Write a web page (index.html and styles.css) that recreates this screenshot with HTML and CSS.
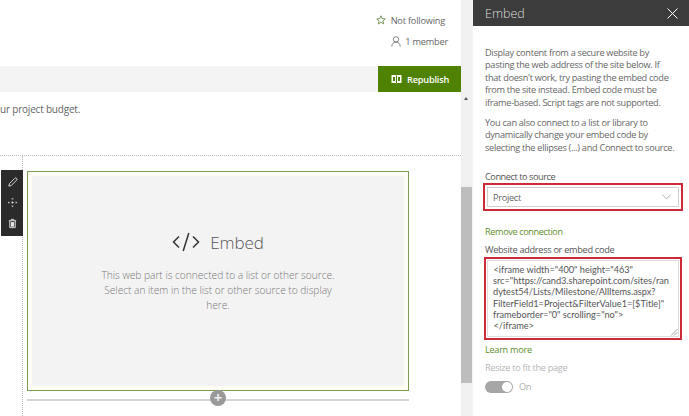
FILE: index.html
```html
<!DOCTYPE html>
<html lang="en">
<head>
<meta charset="utf-8">
<title>Embed</title>
<link rel="stylesheet" href="styles.css">
</head>
<body>
<div class="page">
  <main class="main">
    <header class="site-head">
      <div class="head-row follow">
        <svg class="head-icon" viewBox="0 0 10 10"><path d="M5 .8l1.200 2.800 3 .3-2.300 2 .7 3L5 7.300 2.400 8.900l.7-3-2.300-2 3-.3z" fill="none" stroke="#5f7f3a" stroke-width=".8"/></svg>
        <span>Not following</span>
      </div>
      <div class="head-row member">
        <svg class="head-icon tall" viewBox="0 0 10 11"><circle cx="5" cy="3.400" r="2.700" fill="none" stroke="#666" stroke-width=".8"/><path d="M.8 10.500c0-2.800 1.800-4.400 4.200-4.400s4.200 1.600 4.200 4.400" fill="none" stroke="#666" stroke-width=".8"/></svg>
        <span>1 member</span>
      </div>
    </header>
    <div class="command-bar">
      <button class="republish">
        <svg class="book" viewBox="0 0 11 10"><path d="M.5 1h4.200l.8.700.8-.7h4.200v8H6.300l-.8.500-.8-.5H.5z" fill="#fff"/><path d="M5.500 2v7" stroke="#4f8203"/><path d="M2 3h2v4H2zM7 3h2v4H7z" fill="#4f8203"/></svg>
        Republish
      </button>
    </div>
    <p class="intro">ur project budget.</p>
    <section class="canvas">
      <div class="toolbar">
        <svg class="tool" viewBox="0 0 12 12"><path d="M2 10l.7-2.800L8.400 1.500a1.300 1.300 0 0 1 2 2L4.700 9.300z" fill="none" stroke="#e6e6e6" stroke-width="1"/></svg>
        <svg class="tool" viewBox="0 0 12 12"><path d="M6 1l1.500 1.500h-3zM6 11L4.500 9.500h3zM1 6l1.500-1.500v3zM11 6L9.500 4.500v3z" fill="#e6e6e6"/><circle cx="6" cy="6" r="1.200" fill="#e6e6e6"/></svg>
        <svg class="tool" viewBox="0 0 12 12"><path d="M2 3h8M4.500 3V1.500h3V3M3 3v7.500h6V3" fill="none" stroke="#e6e6e6" stroke-width="1"/><path d="M4.200 4.500h3.600V9.500H4.200z" fill="#e6e6e6"/></svg>
      </div>
      <div class="webpart">
        <div class="placeholder">
          <div class="ph-title">
            <svg class="code" viewBox="0 0 28 20"><path d="M7 4.500L1.500 10 7 15.500M21 4.500l5.500 5.500L21 15.500M16.800 1l-5.600 18" fill="none" stroke="#333" stroke-width="1.500"/></svg>
            <span>Embed</span>
          </div>
          <p class="ph-text">This web part is connected to a list or other source. Select an item in the list or other source to display here.</p>
        </div>
      </div>
      <div class="add-line"><span class="add-btn">+</span></div>
    </section>
  </main>
  <div class="scrollbar"><span class="arrow"></span><span class="thumb"></span></div>
  <aside class="panel">
    <header class="panel-head">
      <span>Embed</span>
      <svg class="close" viewBox="0 0 11 11"><path d="M.5.500l10 10M10.500.500l-10 10" stroke="#fff" stroke-width="1"/></svg>
    </header>
    <div class="panel-body">
      <p class="desc first">Display content from a secure website by pasting the web address of the site below. If that doesn't work, try pasting the embed code from the site instead. Embed code must be iframe-based. Script tags are not supported.</p>
      <p class="desc second">You can also connect to a list or library to dynamically change your embed code by selecting the ellipses (...) and Connect to source.</p>
      <div class="field-label source-label">Connect to source</div>
      <div class="highlight select-wrap">
        <div class="select">
          <span>Project</span>
          <svg class="chev" viewBox="0 0 10 6"><path d="M.5.500L5 5 9.500.500" fill="none" stroke="#888" stroke-width=".8"/></svg>
        </div>
      </div>
      <a class="link remove">Remove connection</a>
      <div class="field-label code-label">Website address or embed code</div>
      <div class="highlight code-wrap">
        <div class="code-box">&#8202;&lt;iframe width="400" height="463"<br>src="https://cand3.sharepoint.com/sites/ran<br>dytest54/Lists/Milestone/AllItems.aspx?<br>FilterField1=Project&amp;FilterValue1=[$Title]"<br>frameborder="0" scrolling="no"&gt;<br>&#8202;&lt;/iframe&gt;
          <svg class="grip" viewBox="0 0 8 8"><path d="M1 7.500L7.500 1M4 7.500L7.500 4" stroke="#777" stroke-width=".7"/></svg>
        </div>
      </div>
      <a class="link learn">Learn more</a>
      <div class="muted-label">Resize to fit the page</div>
      <div class="toggle-row"><span class="toggle"><span class="knob"></span></span><span class="on">On</span></div>
    </div>
  </aside>
</div>
</body>
</html>
```
FILE: styles.css
```css
* { box-sizing: border-box; }
html, body { margin: 0; height: 100%; }
body { font-family: "Open Sans", "Noto Sans", sans-serif; color: #555; background: #fff; overflow: hidden; }
p { margin: 0; }

.page { display: flex; width: 689px; height: 416px; overflow: hidden; }
.main { width: 461px; flex: none; display: flex; flex-direction: column; }

.site-head { height: 66px; padding: 13px 0 0; display: flex; flex-direction: column; align-items: flex-end; font-size: 9.200px; color: #666; letter-spacing: -.2px; }
.head-row { display: flex; align-items: center; height: 14px; gap: 5px; }
.follow { margin-right: 16px; }
.member { margin-top: 7px; margin-right: 13px; gap: 4px; }
.head-icon { width: 10px; height: 10px; }
.head-icon.tall { height: 11px; }

.command-bar { height: 26px; background: #f4f4f4; display: flex; justify-content: flex-end; flex: none; }
.republish { width: 83px; height: 26px; border: 0; padding: 0 0 0 13px; background: #4f8203; color: #fff; font: 600 9.200px "Open Sans", sans-serif; letter-spacing: -.2px; display: flex; align-items: center; gap: 5px; }
.book { width: 11px; height: 10px; }

.intro { height: 63px; padding-top: 10px; font-size: 10px; letter-spacing: -.2px; color: #666; line-height: 14px; flex: none; }

.canvas { flex: 1; position: relative; border-top: 1px dotted #bbb; padding: 15px 0 0 27px; }
.canvas::before { content: ""; position: absolute; left: 22px; top: 0; bottom: 0; border-left: 1px dotted #bbb; }
.toolbar { position: absolute; left: 1px; top: 14px; width: 22px; height: 66px; background: #2b2b2b; display: flex; flex-direction: column; align-items: center; justify-content: space-around; padding: 2px 0; }
.tool { width: 11px; height: 11px; }

.webpart { width: 382px; height: 220px; border: 1px solid #7d9a52; padding: 4px; background: #fdfdf6; }
.placeholder { height: 100%; background: #f3f3f3; display: flex; flex-direction: column; align-items: center; padding-top: 54px; }
.ph-title { display: flex; align-items: center; gap: 10px; font-size: 17px; font-weight: 300; color: #555; height: 24px; letter-spacing: -.1px; }
.code { width: 28px; height: 20px; }
.ph-text { width: 250px; margin-top: 14px; text-align: center; font-size: 10.200px; line-height: 15px; font-weight: 300; color: #777; letter-spacing: -.02px; }

.add-line { width: 382px; height: 2px; margin-top: 8px; background: #d4d4d4; position: relative; }
.add-btn { position: absolute; left: 183px; top: -9px; width: 16px; height: 16px; border-radius: 50%; background: #999; color: #eee; font: 700 15px/15px "Open Sans", sans-serif; text-align: center; }

.scrollbar { width: 11px; flex: none; background: #f0f0f0; position: relative; }
.arrow { position: absolute; left: 3px; top: 97px; border: 2px solid transparent; border-bottom: 3px solid #555; border-top: 0; }
.thumb { position: absolute; left: 0; top: 187px; width: 100%; height: 196px; background: #bdbdbd; }

.panel { width: 217px; flex: none; display: flex; flex-direction: column; border-left: 1px solid #f4f4f4; }
.panel-head { height: 26px; background: #3c3c3c; color: #ddd; display: flex; align-items: center; justify-content: space-between; padding: 0 11px 0 12px; font-size: 12.500px; font-weight: 300; flex: none; }
.close { width: 11px; height: 11px; }
.panel-body { padding: 21px 0 0 12px; font-size: 9.200px; color: #666; letter-spacing: -.3px; }
.desc { width: 198px; line-height: 12.400px; }
.desc.first { width: 186px; }
.second { margin-top: 8px; }
.field-label { color: #555; line-height: 12px; }
.source-label { margin-top: 17px; letter-spacing: -.45px; }
.highlight { border: 2px solid #cc2a36; }
.select-wrap { height: 28px; width: 200px; margin-left: -2px; padding: 2px; }
.select { height: 100%; border: 1px solid #d0d0d0; display: flex; align-items: center; justify-content: space-between; padding: 0 7px 0 5px; }
.chev { width: 9px; height: 6px; }
.link { display: block; color: #5f8f2a; line-height: 12px; }
.remove { margin-top: 15px; letter-spacing: -.4px; }
.code-label { margin-top: 6px; }
.code-wrap { height: 83px; width: 198px; margin: 1px 0 0 -1px; padding: 1px; }
.code-box { position: relative; height: 100%; border: 1px solid #ddd; padding: 3px 0 0 5px; font-family: "Lato", sans-serif; font-size: 9.200px; line-height: 11.100px; color: #555; letter-spacing: -.02px; white-space: nowrap; }
.grip { position: absolute; right: 0; bottom: 0; width: 8px; height: 8px; }
.learn { margin-top: 4px; }
.muted-label { margin-top: 6px; color: #b5b5b5; line-height: 12px; }
.toggle-row { display: flex; align-items: center; gap: 6px; margin-top: 6px; color: #b0b0b0; }
.toggle { width: 28px; height: 12px; border-radius: 6px; background: #a6a6a6; display: flex; justify-content: flex-end; align-items: center; padding-right: 1px; }
.knob { width: 10px; height: 10px; border-radius: 50%; background: #fff; }
```
